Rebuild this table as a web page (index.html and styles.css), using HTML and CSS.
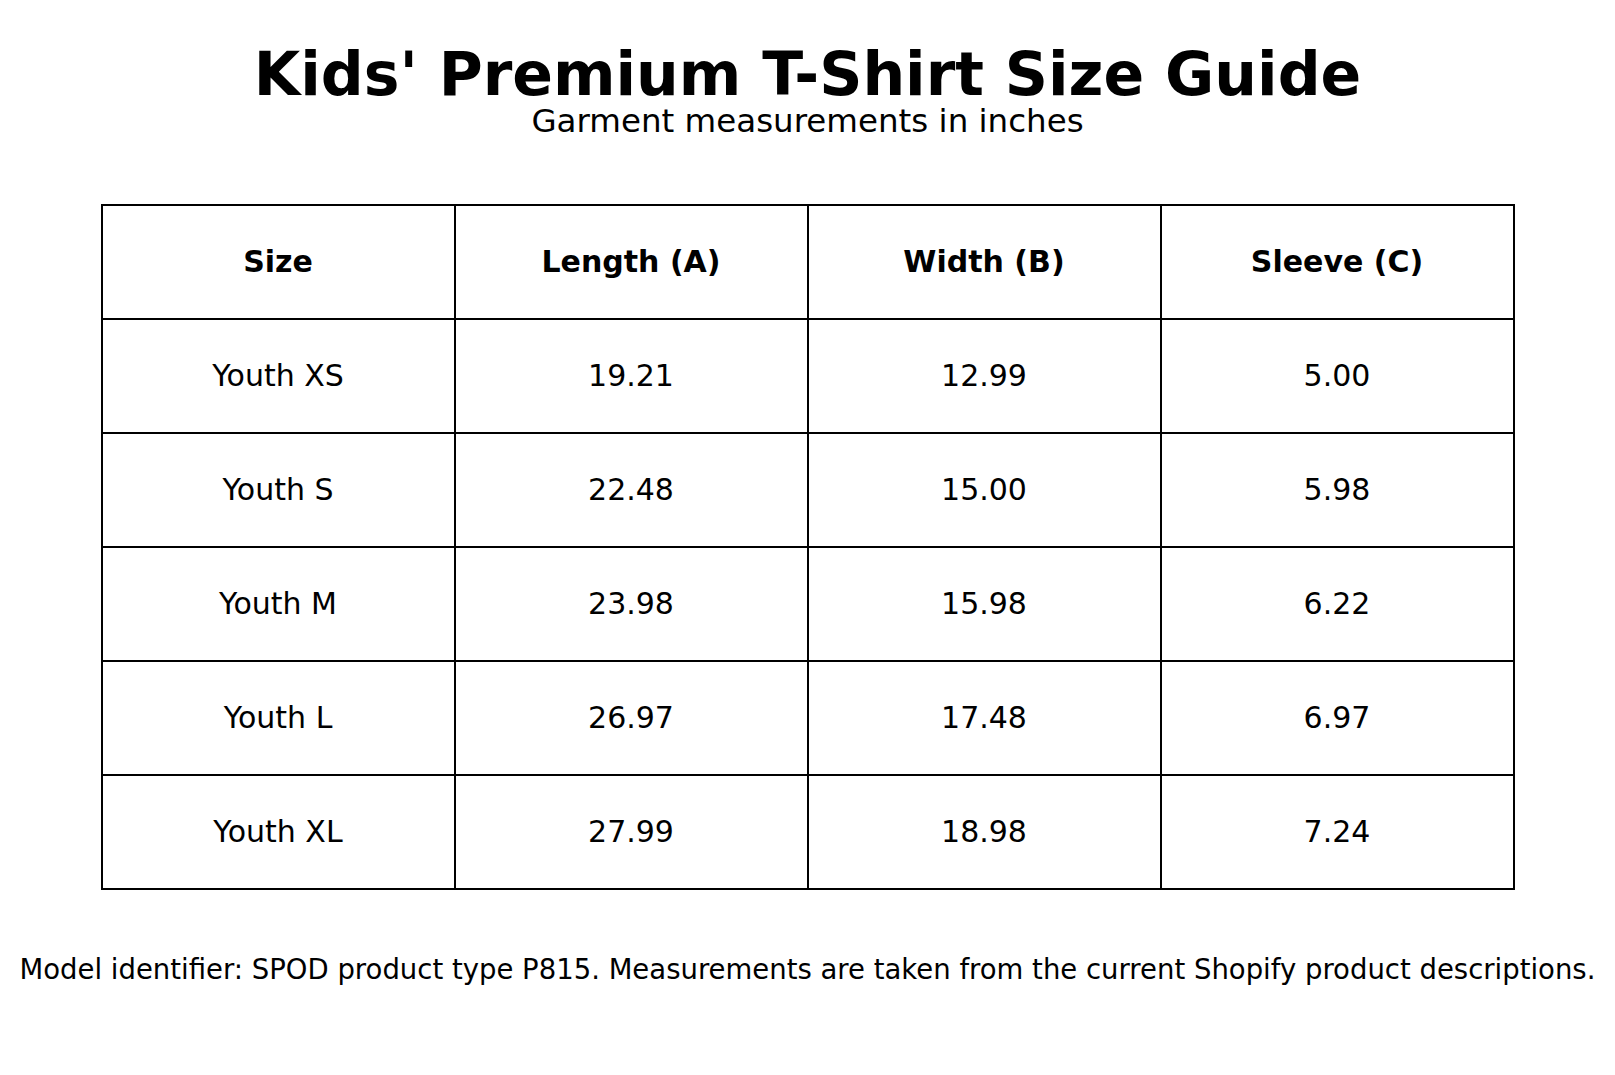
FILE: index.html
```html
<!DOCTYPE html>
<html>
<head>
<meta charset="utf-8">
<link rel="stylesheet" href="styles.css">
</head>
<body>
<div class="page">
  <h1 class="title">Kids' Premium T-Shirt Size Guide</h1>
  <div class="subtitle">Garment measurements in inches</div>
  <table class="sizes">
    <thead>
      <tr><th>Size</th><th>Length (A)</th><th>Width (B)</th><th>Sleeve (C)</th></tr>
    </thead>
    <tbody>
      <tr><td>Youth XS</td><td>19.21</td><td>12.99</td><td>5.00</td></tr>
      <tr><td>Youth S</td><td>22.48</td><td>15.00</td><td>5.98</td></tr>
      <tr><td>Youth M</td><td>23.98</td><td>15.98</td><td>6.22</td></tr>
      <tr><td>Youth L</td><td>26.97</td><td>17.48</td><td>6.97</td></tr>
      <tr><td>Youth XL</td><td>27.99</td><td>18.98</td><td>7.24</td></tr>
    </tbody>
  </table>
  <div class="footer">Model identifier: SPOD product type P815. Measurements are taken from the current Shopify product descriptions.</div>
</div>
</body>
</html>
```
FILE: styles.css
```css
html, body {
  margin: 0;
  padding: 0;
  background: #fff;
}
body {
  font-family: "DejaVu Sans", sans-serif;
  color: #000;
}
.page {
  width: 1615px;
  height: 1075px;
  display: flex;
  flex-direction: column;
  align-items: center;
}
.title {
  margin: 44px 0 0 0;
  font-size: 60px;
  font-weight: bold;
  line-height: 60px;
  white-space: nowrap;
}
.subtitle {
  margin-top: 1px;
  font-size: 32.5px;
  line-height: 32.5px;
  white-space: nowrap;
}
.sizes {
  margin-top: 66px;
  width: 1414px;
  border-collapse: collapse;
  table-layout: fixed;
}
.sizes th, .sizes td {
  border: 2px solid #000;
  height: 112px;
  padding: 0;
  text-align: center;
  vertical-align: middle;
  font-size: 30px;
  line-height: 30px;
}
.sizes th {
  font-weight: bold;
}
.footer {
  margin-top: 66px;
  font-size: 27.5px;
  line-height: 27.5px;
  white-space: nowrap;
}
```
